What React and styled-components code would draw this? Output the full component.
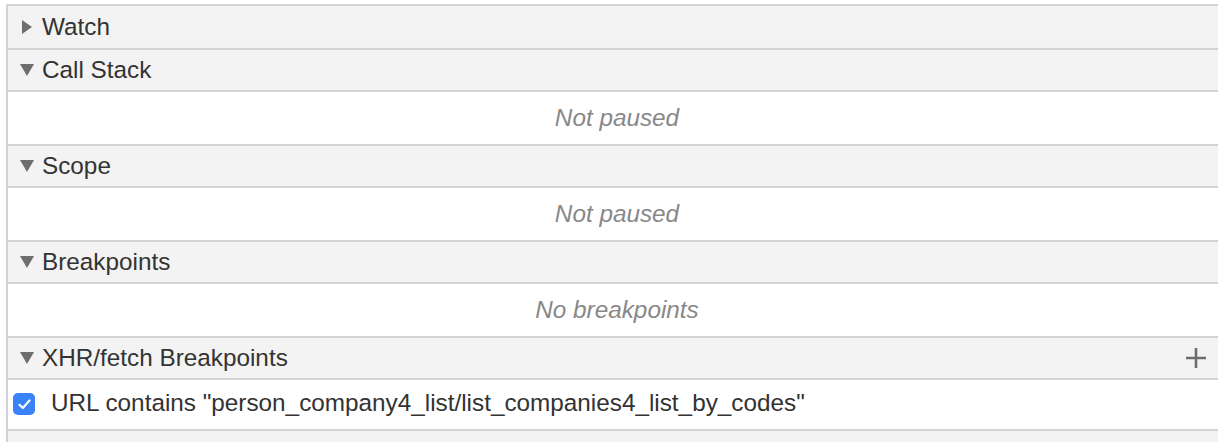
import React from "react";
import styled, { createGlobalStyle } from "styled-components";

const GlobalStyle = createGlobalStyle`
  html, body {
    margin: 0;
    padding: 0;
    background: #fff;
  }
  body {
    font-family: "Liberation Sans", Arial, sans-serif;
  }
`;

const Page = styled.div`
  width: 1218px;
  height: 442px;
  overflow: hidden;
  padding: 4px 0 0 6px;
  box-sizing: border-box;
  background: #fff;
`;

const Panel = styled.div`
  height: 100%;
  border-left: 2px solid #d3d3d3;
  border-top: 2px solid #d3d3d3;
  background: #f3f3f3;
  display: flex;
  flex-direction: column;
`;

const Header = styled.div`
  display: flex;
  align-items: center;
  height: ${(p) => p.$h || 40}px;
  padding: 0 12px;
  background: #f3f3f3;
  border-bottom: 2px solid #d3d3d3;
  color: #333;
  font-size: 24.3px;
  flex-shrink: 0;
`;

const Arrow = styled.svg`
  width: 14px;
  height: 14px;
  margin-right: 8px;
  flex-shrink: 0;
`;

const Title = styled.span`
  flex: 1;
  line-height: 1;
`;

const Body = styled.div`
  height: 52px;
  display: flex;
  align-items: center;
  justify-content: center;
  padding-left: 8px;
  background: #fff;
  border-bottom: 2px solid #d3d3d3;
  color: #888;
  font-size: 24.3px;
  font-style: italic;
  flex-shrink: 0;
`;

const Row = styled.div`
  height: 46px;
  display: flex;
  align-items: center;
  padding-left: 5px;
  padding-bottom: 3px;
  background: #fff;
  border-bottom: 2px solid #d3d3d3;
  color: #333;
  font-size: 24.3px;
  flex-shrink: 0;
`;

const Check = styled.span`
  width: 22px;
  height: 22px;
  border-radius: 5px;
  background: #3a82f7;
  display: flex;
  align-items: center;
  justify-content: center;
  margin-right: 16px;
  margin-top: 2px;
`;

const Triangle = ({ open }) => (
  <Arrow viewBox="0 0 14 14">
    {open ? (
      <polygon points="0,1 14,1 7,13" fill="#6e6e6e" />
    ) : (
      <polygon points="2,0 12,7 2,14" fill="#6e6e6e" />
    )}
  </Arrow>
);

const Plus = () => (
  <svg width="20" height="20" viewBox="0 0 20 20">
    <path d="M10 0V20M0 10H20" stroke="#6e6e6e" strokeWidth="2.6" />
  </svg>
);

const sections = [
  { title: "Call Stack", empty: "Not paused" },
  { title: "Scope", empty: "Not paused" },
  { title: "Breakpoints", empty: "No breakpoints" },
];

export default function App() {
  return (
    <>
      <GlobalStyle />
      <Page>
        <Panel>
          <Header $h={42}>
            <Triangle />
            <Title>Watch</Title>
          </Header>
          {sections.map((s) => (
            <React.Fragment key={s.title}>
              <Header>
                <Triangle open />
                <Title>{s.title}</Title>
              </Header>
              <Body>{s.empty}</Body>
            </React.Fragment>
          ))}
          <Header>
            <Triangle open />
            <Title>XHR/fetch Breakpoints</Title>
            <Plus />
          </Header>
          <Row>
            <Check>
              <svg width="13" height="11" viewBox="0 0 13 11">
                <path
                  d="M1.5 5.8L4.8 9L11.5 1.5"
                  fill="none"
                  stroke="#fff"
                  strokeWidth="2.2"
                  strokeLinecap="round"
                  strokeLinejoin="round"
                />
              </svg>
            </Check>
            URL contains "person_company4_list/list_companies4_list_by_codes"
          </Row>
        </Panel>
      </Page>
    </>
  );
}
